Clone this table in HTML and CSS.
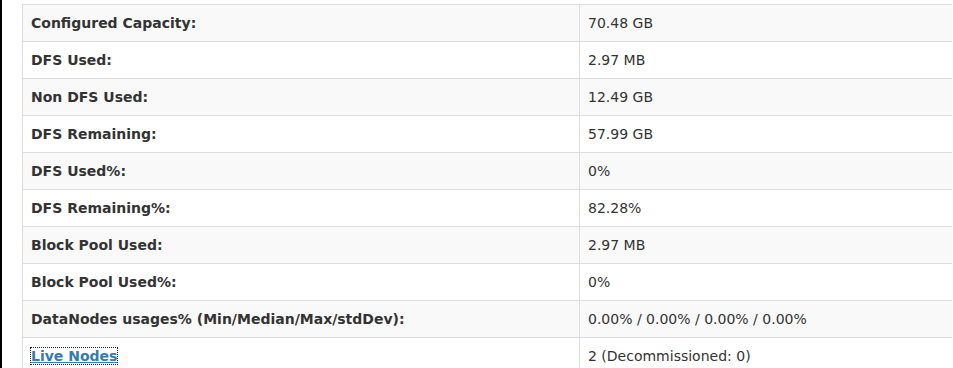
FILE: index.html
```html
<!DOCTYPE html>
<html>
<head>
<meta charset="utf-8">
<link rel="stylesheet" href="styles.css">
</head>
<body>
<div class="page">
<table class="info">
<tr><th>Configured Capacity:</th><td>70.48 GB</td></tr>
<tr><th>DFS Used:</th><td>2.97 MB</td></tr>
<tr><th>Non DFS Used:</th><td>12.49 GB</td></tr>
<tr><th>DFS Remaining:</th><td>57.99 GB</td></tr>
<tr><th>DFS Used%:</th><td>0%</td></tr>
<tr><th>DFS Remaining%:</th><td>82.28%</td></tr>
<tr><th>Block Pool Used:</th><td>2.97 MB</td></tr>
<tr><th>Block Pool Used%:</th><td>0%</td></tr>
<tr><th>DataNodes usages% (Min/Median/Max/stdDev):</th><td>0.00% / 0.00% / 0.00% / 0.00%</td></tr>
<tr><th><a class="link" href="#">Live Nodes</a></th><td>2 (Decommissioned: 0)</td></tr>
</table>
</div>
</body>
</html>
```
FILE: styles.css
```css
html, body {
  margin: 0;
  padding: 0;
  background: #fff;
}
.page {
  border-left: 2px solid #000;
  padding: 4px 1px 0 20px;
  height: 364px;
  overflow: hidden;
  font-family: "DejaVu Sans", sans-serif;
  font-size: 14px;
  line-height: 20px;
  color: #333;
}
.info {
  width: 930px;
  border-collapse: collapse;
  border-left: 1px solid #ddd;
}
.info th, .info td {
  padding: 8px;
  text-align: left;
  vertical-align: top;
  border-top: 1px solid #ddd;
}
.info th {
  width: 540px;
  font-weight: bold;
}
.info td {
  border-left: 1px solid #ddd;
}
.info tr:nth-child(odd) {
  background: #f9f9f9;
}
.link {
  color: #337ab7;
  text-decoration: underline;
  outline: 1px dotted #222;
}
```
